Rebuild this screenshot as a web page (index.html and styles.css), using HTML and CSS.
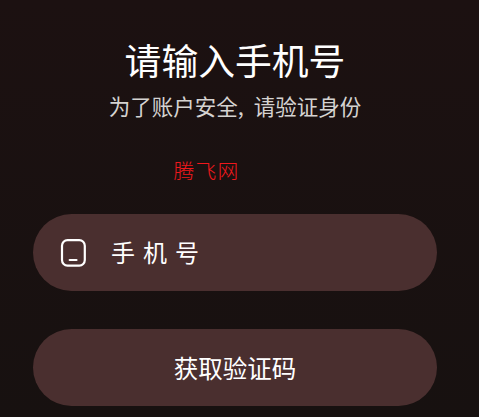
FILE: index.html
```html
<!DOCTYPE html>
<html lang="zh-CN">
<head>
<meta charset="utf-8">
<title>请输入手机号</title>
<link rel="stylesheet" href="styles.css">
</head>
<body>
<main class="login">
  <h1 class="title">请输入手机号</h1>
  <p class="subtitle">为了账户安全, 请验证身份</p>
  <p class="brand">腾飞网</p>
  <label class="field">
    <svg class="phone-icon" viewBox="0 0 26 29" fill="none" stroke="#fff" stroke-width="2.2" stroke-linecap="round"><rect x="2" y="2.2" width="22.8" height="25.4" rx="5.5"/><path d="M9.7 22h6.8"/></svg>
    <span class="placeholder">手机号</span>
  </label>
  <button class="submit" type="button">获取验证码</button>
</main>
</body>
</html>
```

FILE: styles.css
```css
* { box-sizing: border-box; }
body {
  margin: 0;
  height: 417px;
  overflow: hidden;
  background: linear-gradient(#1c1111, #171110);
  color: #fff;
  font-family: "Noto Sans CJK SC", sans-serif;
}
.login {
  display: flex;
  flex-direction: column;
  padding: 32px 42px 0 33px;
}
.title {
  margin: 0;
  font-size: 36.8px;
  font-weight: 400;
  line-height: 54px;
  text-align: center;
}
.subtitle {
  margin: 4px 0 0;
  color: #d5d3d1;
  font-size: 21.5px;
  line-height: 32px;
  text-align: center;
  word-spacing: 5px;
}
.brand {
  margin: 32px 0 0 140.5px;
  color: #f0181c;
  font-size: 20.8px;
  font-weight: 300;
  line-height: 32px;
  letter-spacing: 1.2px;
}
.field {
  display: flex;
  align-items: center;
  height: 77px;
  margin-top: 28px;
  padding-left: 27px;
  border-radius: 39px;
  background: #4a2f2f;
}
.phone-icon { width: 26px; height: 29px; }
.placeholder {
  margin-left: 25px;
  padding-bottom: 2px;
  font-size: 24px;
  letter-spacing: 8px;
}
.submit {
  height: 77px;
  margin-top: 38.4px;
  padding: 0 0 1px;
  border: 0;
  border-radius: 39px;
  background: #4a2f2f;
  color: inherit;
  font: 400 24.5px "Noto Sans CJK SC", sans-serif;
}
```
